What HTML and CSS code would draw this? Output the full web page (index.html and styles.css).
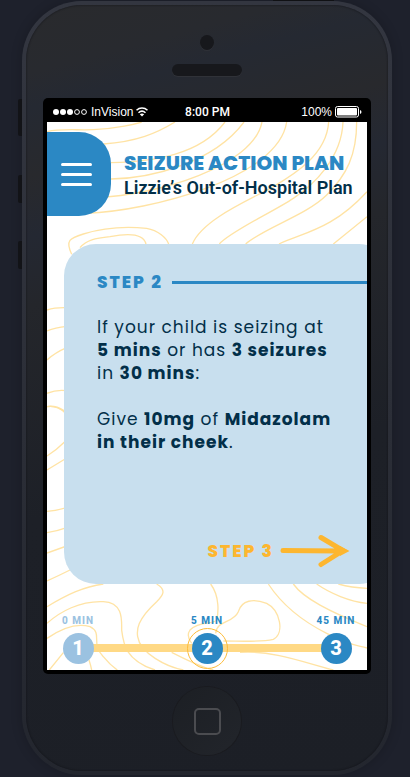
FILE: index.html
```html
<!DOCTYPE html>
<html lang="en">
<head>
<meta charset="utf-8">
<meta name="viewport" content="width=device-width, initial-scale=1">
<title>Seizure Action Plan</title>
<link rel="stylesheet" href="styles.css">
</head>
<body>
<div class="phone">
  <span class="side-key key-mute"></span>
  <span class="side-key key-up"></span>
  <span class="side-key key-down"></span>
  <span class="power-key"></span>
  <div class="phone-face">
    <div class="phone-top">
      <span class="camera"></span>
      <span class="speaker"></span>
    </div>
    <div class="screen">
      <div class="status">
        <div class="status-left">
          <svg class="signal" width="35" height="8" viewBox="0 0 35 8" aria-hidden="true"><g fill="#fff"><circle cx="3" cy="4" r="3"/><circle cx="10" cy="4" r="3"/><circle cx="17" cy="4" r="3"/></g><g fill="none" stroke="#fff"><circle cx="24" cy="4" r="2.4"/><circle cx="31" cy="4" r="2.4"/></g></svg>
          <span>InVision</span>
          <svg width="12" height="10" viewBox="0 0 12 10" fill="none" stroke="#fff" stroke-width="1.5" aria-hidden="true"><path d="M.5 3.3C3.6.3 8.4.3 11.5 3.3M2.5 5.7C4.6 3.8 7.4 3.8 9.5 5.7"/><path d="M6 9.5 3.8 7.3Q6 5.7 8.2 7.3Z" fill="#fff" stroke="none"/></svg>
        </div>
        <strong class="clock">8:00 PM</strong>
        <div class="status-right">
          <span>100%</span>
          <svg width="27" height="12" viewBox="0 0 27 12" aria-hidden="true"><rect x=".5" y=".5" width="23" height="10.5" rx="2" fill="none" stroke="#fff"/><rect x="2" y="2" width="20" height="7.5" rx="1" fill="#fff"/><path d="M25 4v4q1.500-.5 1.500-2t-1.500-2" fill="#fff"/></svg>
        </div>
      </div>
      <main class="app">
        <svg class="contours" viewBox="0 0 320 548" preserveAspectRatio="xMidYMid slice" aria-hidden="true">
          <g transform="translate(-7 -27) scale(.33333)">
            <path d="M21 110C60 100 110 106 160 104 230 101 290 86 305 81M190 147C290 140 350 115 405 81M213 203C340 200 480 180 555 81M213 252C330 250 520 205 612 81M170 308C350 300 640 215 666 81M138 355C330 348 715 250 740 81"/>
            <path d="M457 447C490 370 640 310 700 275S860 180 866 81M538 447C570 410 700 350 760 310S905 190 909 81M617 447C670 400 800 360 860 300S950 180 950 81M717 447C800 410 880 400 981 290M880 447L981 365"/>
            <path d="M95 478C75 435 90 430 130 417 200 395 270 395 320 400 355 406 380 430 386 447M120 458C140 435 165 430 210 425 260 415 310 415 318 447"/>
          </g>
          <g transform="translate(-7 108) scale(.33333)">
            <path d="M21 240Q45 232 80 233M21 303Q45 292 80 289M21 390Q45 368 80 353M21 490Q50 478 80 482M21 530Q45 525 72 542"/>
          </g>
          <g transform="translate(-7 278) scale(.33333)">
            <path d="M21 20Q50 15 76 39M21 168Q50 150 76 124M21 210L80 174M21 334Q50 332 80 323M21 398Q50 394 80 383M21 459L80 438M21 543Q60 525 90 510"/>
          </g>
          <g transform="translate(-7 448) scale(.33333)">
            <path d="M21 110C80 75 130 50 190 42M21 160C60 125 120 92 190 95 250 98 245 150 245 180 250 220 255 270 345 300M21 205C50 185 100 155 150 170 190 190 150 220 190 260Q210 285 232 300M28 300L70 248M147 270Q152 285 155 300"/>
            <path d="M350 42C380 60 370 75 350 95 290 150 290 180 293 200 300 250 380 290 430 300M512 42C540 80 535 130 530 150 520 165 480 150 450 180 440 195 447 210 455 220M395 247C430 265 480 290 520 300"/>
            <path d="M527 190C530 150 580 160 595 125 605 90 640 85 680 100 720 120 735 190 700 208 660 217 600 213 550 213M600 247C700 240 800 280 880 300"/>
            <path d="M685 42C720 95 780 150 860 190S950 225 981 234M760 42C790 85 870 125 981 170M830 42C870 70 930 95 981 100M895 42Q935 53 981 55"/>
          </g>
        </svg>
        <header class="header">
          <button class="menu" type="button" aria-label="Menu">
            <span class="bar"></span><span class="bar"></span><span class="bar"></span>
          </button>
          <div class="titles">
            <h1>SEIZURE ACTION PLAN</h1>
            <p>Lizzie’s Out-of-Hospital Plan</p>
          </div>
        </header>
        <section class="card">
          <div class="card-head"><h2>STEP 2</h2><span class="rule"></span></div>
          <p>If your child is seizing at<br><b>5 mins</b> or has <b>3 seizures</b><br>in <b>30 mins</b>:</p>
          <p>Give <b>10mg</b> of <b>Midazolam</b><br><b>in their cheek</b>.</p>
          <a class="next" href="#step-3">STEP 3
            <svg width="70" height="34" viewBox="0 0 70 34" aria-hidden="true"><path d="M3 16.500 58 17M41 3.500 63 16.500 41 30.500" fill="none" stroke="#fdb62f" stroke-width="5" stroke-linecap="round"/><path d="M60 12 69.500 17 60 22Z" fill="#fdb62f"/></svg>
          </a>
        </section>
        <nav aria-label="Steps">
          <ol class="timeline">
            <li class="done"><button type="button"><span class="time">0 MIN</span><span class="dot">1</span></button></li>
            <li class="current"><button type="button" aria-current="step"><span class="time">5 MIN</span><span class="dot">2</span></button></li>
            <li><button type="button"><span class="time">45 MIN</span><span class="dot">3</span></button></li>
          </ol>
        </nav>
      </main>
    </div>
    <div class="phone-bottom">
      <button class="home" type="button" aria-label="Home"><span></span></button>
    </div>
  </div>
</div>
</body>
</html>
```
FILE: styles.css
```css
* {
  box-sizing: border-box;
}

body {
  margin: 0;
  padding: 1px 18px 1px 22px;
  min-height: 100vh;
  background: #1e212c;
  font-family: Poppins, Inter, "Liberation Sans", sans-serif;
}

h1, h2, p, ol {
  margin: 0;
  padding: 0;
}

button {
  border: 0;
  padding: 0;
  background: none;
  font: inherit;
  color: inherit;
  cursor: pointer;
}

.phone {
  position: relative;
  max-width: 370px;
  margin: 0 auto;
  padding: 4px;
  border-radius: 60px;
  background: linear-gradient(#333640, #2c2f38 50%, #23262e);
  box-shadow: 0 0 12px rgba(0, 0, 0, .2);
}

.phone-face {
  padding: 0 17px;
  border-radius: 56px;
  background: linear-gradient(165deg, #292a2d 0%, #282a2f 8%, #252932 12%, #28292d 20%, #242832 27%, #24262b 35%, #1d2027 60%, #1c1f26 100%);
  box-shadow: inset 0 0 2px #101116;
}

.side-key {
  position: absolute;
  left: -4px;
  width: 4px;
  height: 28px;
  border-radius: 2px 0 0 2px;
  background: #121317;
}

.key-mute {
  top: 98px;
  height: 37px;
}

.key-up {
  top: 174px;
}

.key-down {
  top: 240px;
}

.power-key {
  position: absolute;
  top: -1px;
  right: 58px;
  width: 61px;
  height: 1px;
  background: #101114;
}

.phone-top {
  display: flex;
  flex-direction: column;
  align-items: center;
  gap: 14px;
  height: 93px;
  padding-top: 30px;
}

.camera {
  width: 14px;
  height: 15px;
  border-radius: 50%;
  background: #17181c;
  box-shadow: 0 1px #303238;
}

.speaker {
  width: 70px;
  height: 12px;
  border-radius: 6px;
  background: #17181c;
  box-shadow: 0 1px #303238;
}

.screen {
  padding: 0 4px 4px;
  border-radius: 5px;
  background: #000;
}

.status {
  display: grid;
  grid-template-columns: 1fr auto 1fr;
  align-items: center;
  height: 24px;
  padding: 3px 5px 0 6px;
  color: #fff;
  font: 12px/16px "Liberation Sans", sans-serif;
}

.status-left, .status-right {
  display: flex;
  align-items: center;
  gap: 3px;
}

.status-right {
  justify-content: flex-end;
}

.clock {
  font: 500 12px/16px Roboto, sans-serif;
}

.app {
  position: relative;
  overflow: hidden;
  padding: 10px 0 6px;
  background: #fff;
}

.contours {
  position: absolute;
  inset: 0;
  width: 100%;
  height: 100%;
  fill: none;
  stroke: #ffe3a4;
  stroke-width: 4;
}

.header, .card, .timeline {
  position: relative;
}

.header {
  display: flex;
  align-items: center;
  gap: 13px;
}

.menu {
  flex: none;
  display: flex;
  flex-direction: column;
  align-items: center;
  justify-content: center;
  gap: 7px;
  width: 64px;
  height: 84px;
  padding-right: 6px;
  border-radius: 0 32px 32px 0;
  background: #2b88c4;
}

.bar {
  width: 31px;
  height: 3px;
  border-radius: 2px;
  background: #fff;
}

.titles {
  padding-top: 4px;
  white-space: nowrap;
}

.titles h1 {
  font-size: 20px;
  font-weight: 800;
  line-height: 24px;
  color: #2b88c4;
}

.titles p {
  font: 600 18px/26px Roboto, sans-serif;
  color: #022f49;
}

.card {
  display: flex;
  flex-direction: column;
  gap: 23px;
  min-height: 340px;
  margin: 28px -24px 0 17px;
  padding: 27px 41px 16px 33px;
  border-radius: 32px;
  background: #c8dfee;
  color: #022f49;
  font-size: 17px;
  line-height: 23px;
  letter-spacing: 1px;
  white-space: nowrap;
}

.card-head {
  display: flex;
  align-items: center;
  gap: 9px;
  margin-right: -41px;
  color: #2b88c4;
}

.card-head h2, .next {
  font-size: 17px;
  font-weight: 800;
  line-height: 22px;
  letter-spacing: 2px;
}

.rule {
  flex: 1;
  height: 3px;
  background: #2b88c4;
}

.card b {
  font-weight: 700;
}

.next {
  display: flex;
  align-items: center;
  align-self: flex-end;
  gap: 6px;
  margin-top: auto;
  color: #fdb62f;
  text-decoration: none;
}

.timeline {
  display: flex;
  justify-content: space-between;
  margin-top: 30px;
  padding: 0 8px;
  list-style: none;
}

.timeline::before {
  content: "";
  position: absolute;
  left: 31px;
  right: 31px;
  bottom: 12px;
  height: 8px;
  background: #ffd985;
}

.timeline li {
  position: relative;
  width: 46px;
}

.timeline button {
  display: flex;
  flex-direction: column;
  align-items: center;
  gap: 5px;
  width: 100%;
  color: #2b88c4;
  white-space: nowrap;
}

.time {
  font: 800 10px/14px Roboto, sans-serif;
  letter-spacing: 1px;
}

.dot {
  position: relative;
  width: 31px;
  height: 31px;
  border-radius: 50%;
  background: #2b88c4;
  color: #fff;
  font: 800 20px/31px Roboto, sans-serif;
}

.done button {
  color: #9bc2e1;
}

.done .dot {
  background: #9bc2e1;
}

.current .dot::after {
  content: "";
  position: absolute;
  inset: -5px;
  border: 1px solid #fdbc3b;
  border-radius: 50%;
}

.phone-bottom {
  display: flex;
  justify-content: center;
  height: 97px;
  padding-top: 13px;
}

.home {
  display: grid;
  place-items: center;
  width: 68px;
  height: 68px;
  border-radius: 50%;
  background: linear-gradient(135deg, #1c1f24, #22252b);
  box-shadow: 0 0 0 1px #1a1b1f;
}

.home span {
  width: 27px;
  height: 27px;
  border: 2px solid #4b4c50;
  border-radius: 5px;
}
```
